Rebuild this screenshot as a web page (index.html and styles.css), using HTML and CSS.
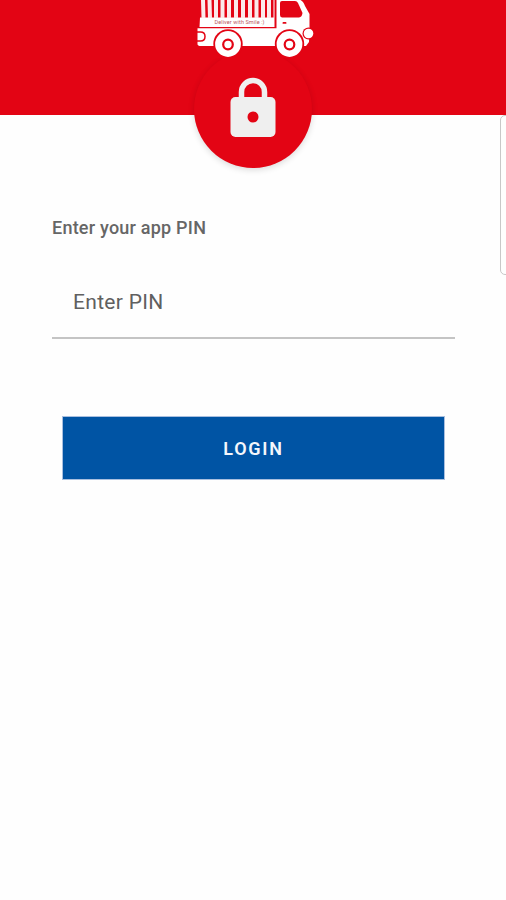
FILE: index.html
```html
<!DOCTYPE html>
<html lang="en">
<head>
    <meta charset="UTF-8">
    <meta name="viewport" content="width=device-width, initial-scale=1.0">
    <title>Login</title>
    <link rel="stylesheet" href="styles.css">
</head>
<body>
    <header class="header">
        <!-- Delivery truck -->
        <svg class="truck" width="140" height="65" viewBox="0 0 140 65">
            <path class="white" d="M15 17.500H88.500V0H89.500V27H14.500Z"/>
            <path class="stripes" d="M18 0L18.500 18M24.500 0L25 18M31 0V18M37.500 0V18M44 0V18M51 0V18M58 0V18M65 0V18M71.500 0V18M78 0V18M84 0V18"/>
            <path class="white" d="M12.500 28.200H91.500V0H115.500Q118.500 1.500 120 6L124.500 14V28L124 42L121 46H16Q12.500 46 12.500 44Z"/>
            <path class="red" d="M95 3Q95 1 97 1H110Q112 1 113 3L117.500 13Q117 17 114 17.500H97Q95 17 95 15Z"/>
            <rect class="red" x="97.500" y="22" width="4" height="1.800" rx="0.900"/>
            <path class="outline" d="M12 32H15.500Q20 32 20 36.500Q20 41 15.500 41H12"/>
            <circle class="red" cx="123.500" cy="33.500" r="6"/>
            <circle class="white" cx="123.500" cy="33.500" r="4.800"/>
            <circle class="red" cx="43" cy="44" r="14.700"/>
            <circle class="white" cx="43" cy="44" r="12.900"/>
            <circle class="hub" cx="43" cy="44.500" r="4.800"/>
            <circle class="red" cx="104.500" cy="44" r="14.700"/>
            <circle class="white" cx="104.500" cy="44" r="12.900"/>
            <circle class="hub" cx="104.500" cy="44.500" r="4.800"/>
            <text class="slogan" x="29.500" y="24.300" textLength="50">Deliver with Smile :)</text>
        </svg>
        <div class="badge">
            <svg width="48" height="62" viewBox="0 0 48 62">
                <path class="shackle" d="M12.500 22V15A11.500 11.500 0 0 1 35.500 15V22"/>
                <rect class="lock" x="1.500" y="20" width="45" height="40" rx="5"/>
                <circle class="red" cx="24" cy="40" r="5.500"/>
            </svg>
        </div>
    </header>
    <div class="side-tab"></div>

    <form class="login-form">
        <label class="title" for="pin">Enter your app PIN</label>
        <input class="pin" id="pin" type="password" placeholder="Enter PIN">
        <button class="login" type="button">LOGIN</button>
    </form>
</body>
</html>
```

FILE: styles.css
```css
body {
    font-family: Roboto, sans-serif;
    background-color: #fefefe;
    margin: 0;
    height: 900px;
    overflow: hidden;
    position: relative;
}
.header {
    position: relative;
    height: 115px;
    background-color: #e30414;
    text-align: center;
}
.truck {
    display: block;
    margin: 0 auto;
    position: relative;
    left: 2px;
}
.white {
    fill: #fff;
}
.red {
    fill: #e30414;
}
.stripes {
    fill: none;
    stroke: #fbe9ea;
    stroke-width: 4;
}
.outline {
    fill: none;
    stroke: #e30414;
    stroke-width: 1.5;
}
.hub {
    fill: #fff;
    stroke: #e30414;
    stroke-width: 2.2;
}
.slogan {
    font-size: 5.5px;
    fill: #b85560;
}
.badge {
    position: absolute;
    left: 194px;
    top: 50px;
    width: 118px;
    height: 118px;
    border-radius: 50%;
    background-color: #e30414;
    box-shadow: 0 2px 6px rgba(0, 0, 0, 0.14);
    display: flex;
    align-items: center;
    justify-content: center;
    clip-path: inset(8px -12px -12px -12px);
}
.badge svg {
    margin-bottom: 2px;
}
.shackle {
    fill: none;
    stroke: #efefef;
    stroke-width: 5.5;
}
.lock {
    fill: #efefef;
}
.side-tab {
    position: absolute;
    left: 500px;
    top: 115px;
    width: 20px;
    height: 158px;
    border: 1px solid #c8c8c8;
    border-radius: 5px;
}
.login-form {
    display: flex;
    flex-direction: column;
    padding: 102px 51px 0 52px;
}
.title {
    font-size: 18px;
    line-height: 22px;
    font-weight: 500;
    letter-spacing: 0.22px;
    color: #666;
}
.pin {
    margin-top: 25px;
    height: 75px;
    box-sizing: border-box;
    padding: 2px 21px 0;
    border: none;
    border-bottom: 2px solid #c4c4c4;
    background: none;
    font-family: Roboto, sans-serif;
    font-size: 21px;
    letter-spacing: 0.3px;
    outline: none;
}
.pin::placeholder {
    color: #606060;
}
.login {
    margin: 77px 10px 0;
    height: 64px;
    border: 1px solid #a9bfdf;
    background-color: #0054a4;
    color: #f4f7fc;
    font-family: Roboto, sans-serif;
    font-size: 18px;
    font-weight: 600;
    letter-spacing: 1.7px;
}
```
